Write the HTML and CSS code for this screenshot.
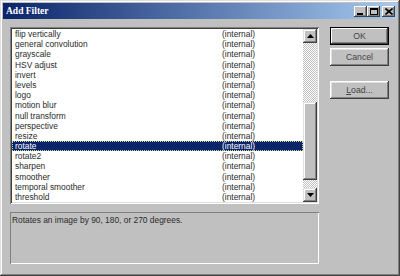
FILE: index.html
```html
<!DOCTYPE html>
<html lang="en">
<head>
    <meta charset="UTF-8">
    <title>Add Filter</title>
    <link rel="stylesheet" href="styles.css">
</head>
<body>
    <div class="window">
        <div class="titlebar">
            <span class="title">Add Filter</span>
            <div class="caption-buttons">
                <span class="cap-btn">
                    <svg width="7" height="7" viewBox="0 0 7 7"><rect x="0" y="5" width="6" height="2" fill="#000"/></svg>
                </span>
                <span class="cap-btn">
                    <svg width="8" height="7" viewBox="0 0 8 7"><rect x="0.5" y="0.5" width="7" height="6" fill="none" stroke="#000"/><rect x="0" y="0" width="8" height="2" fill="#000"/></svg>
                </span>
                <span class="cap-btn close">
                    <svg width="8" height="7" viewBox="0 0 8 7"><path d="M0.5 0.5 L7.5 6.5 M7.5 0.5 L0.5 6.5" stroke="#000" stroke-width="1.6"/></svg>
                </span>
            </div>
        </div>

        <div class="dialog">
            <div class="main">
                <div class="listbox">
                    <ul class="rows">
                        <li class="row"><span>flip vertically</span><span>(internal)</span></li>
                        <li class="row"><span>general convolution</span><span>(internal)</span></li>
                        <li class="row"><span>grayscale</span><span>(internal)</span></li>
                        <li class="row"><span>HSV adjust</span><span>(internal)</span></li>
                        <li class="row"><span>invert</span><span>(internal)</span></li>
                        <li class="row"><span>levels</span><span>(internal)</span></li>
                        <li class="row"><span>logo</span><span>(internal)</span></li>
                        <li class="row"><span>motion blur</span><span>(internal)</span></li>
                        <li class="row"><span>null transform</span><span>(internal)</span></li>
                        <li class="row"><span>perspective</span><span>(internal)</span></li>
                        <li class="row"><span>resize</span><span>(internal)</span></li>
                        <li class="row selected"><span>rotate</span><span>(internal)</span></li>
                        <li class="row"><span>rotate2</span><span>(internal)</span></li>
                        <li class="row"><span>sharpen</span><span>(internal)</span></li>
                        <li class="row"><span>smoother</span><span>(internal)</span></li>
                        <li class="row"><span>temporal smoother</span><span>(internal)</span></li>
                        <li class="row"><span>threshold</span><span>(internal)</span></li>
                    </ul>
                    <div class="scrollbar">
                        <span class="arrow">
                            <svg width="7" height="4" viewBox="0 0 7 4"><path d="M3.5 0 L7 4 L0 4 Z" fill="#000"/></svg>
                        </span>
                        <span class="track track-top"></span>
                        <span class="thumb"></span>
                        <span class="track track-bottom"></span>
                        <span class="arrow">
                            <svg width="7" height="4" viewBox="0 0 7 4"><path d="M0 0 L7 0 L3.5 4 Z" fill="#000"/></svg>
                        </span>
                    </div>
                </div>
                <div class="desc">Rotates an image by 90, 180, or 270 degrees.</div>
            </div>

            <div class="buttons">
                <button class="btn default">OK</button>
                <button class="btn">Cancel</button>
                <button class="btn load"><u>L</u>oad...</button>
            </div>
        </div>
    </div>
</body>
</html>
```

FILE: styles.css
```css
body {
    margin: 0;
    padding: 0;
    background-color: #c0c0c0;
    font-family: 'Liberation Sans', Arial, sans-serif;
    font-size: 8.4px;
    color: #2a2a2a;
}
.window {
    width: 400px;
    height: 276px;
    box-sizing: border-box;
    padding: 3px;
    background-color: #c0c0c0;
    box-shadow: inset -1px -1px #404040, inset 1px 1px #dfdfdf,
                inset -2px -2px #808080, inset 2px 2px #ffffff;
}
.titlebar {
    height: 16px;
    display: flex;
    align-items: center;
    justify-content: space-between;
    padding: 0 2px 0 2px;
    background: linear-gradient(to right, #0a246a, #a6caf0);
}
.title {
    font-family: 'Liberation Serif', 'Times New Roman', serif;
    font-weight: bold;
    font-size: 9.5px;
    color: #ffffff;
    padding-left: 1px;
}
.caption-buttons {
    display: flex;
    align-items: center;
}
.cap-btn {
    width: 13px;
    height: 11px;
    box-sizing: border-box;
    display: flex;
    align-items: center;
    justify-content: center;
    background-color: #c0c0c0;
    box-shadow: inset -1px -1px #404040, inset 1px 1px #ffffff,
                inset -2px -2px #808080;
}
.cap-btn.close {
    margin-left: 2px;
}
.dialog {
    display: flex;
    padding: 8px 0 0 7px;
}
.main {
    width: 309px;
    display: flex;
    flex-direction: column;
    gap: 8px;
}
.listbox {
    height: 177px;
    box-sizing: border-box;
    padding: 2px;
    display: flex;
    background-color: #ffffff;
    box-shadow: inset 1px 1px #808080, inset -1px -1px #ffffff,
                inset 2px 2px #404040, inset -2px -2px #dfdfdf;
}
.rows {
    list-style: none;
    margin: 0;
    padding: 0;
    flex: 1;
    overflow: hidden;
}
.row {
    display: grid;
    grid-template-columns: 207px 1fr;
    height: 10.2px;
    line-height: 10.2px;
    padding-left: 3px;
    white-space: nowrap;
}
.row.selected {
    background-color: #0a246a;
    color: #ffffff;
    outline: 1px dotted #d8d890;
    outline-offset: -1px;
}
.scrollbar {
    width: 14px;
    display: flex;
    flex-direction: column;
}
.arrow,
.thumb {
    background-color: #c0c0c0;
    box-shadow: inset -1px -1px #404040, inset 1px 1px #dfdfdf,
                inset -2px -2px #808080, inset 2px 2px #ffffff;
}
.arrow {
    height: 14px;
    display: flex;
    align-items: center;
    justify-content: center;
}
.track {
    background-color: #e8e8e8;
    background-image: repeating-conic-gradient(#ffffff 0 25%, #c0c0c0 0 50%);
    background-size: 2px 2px;
}
.track-top {
    height: 59px;
}
.thumb {
    height: 78px;
}
.track-bottom {
    flex: 1;
}
.desc {
    height: 52px;
    box-sizing: border-box;
    padding: 3px 2px;
    box-shadow: inset 1px 1px #808080, inset -1px -1px #ffffff;
}
.buttons {
    display: flex;
    flex-direction: column;
    gap: 3px;
    margin-left: 11px;
}
.btn {
    width: 59px;
    height: 18px;
    padding: 0;
    border: none;
    background-color: #c0c0c0;
    font-family: 'Liberation Sans', Arial, sans-serif;
    font-size: 8.7px;
    color: #444;
    box-shadow: inset -1px -1px #404040, inset 1px 1px #ffffff,
                inset -2px -2px #808080, inset 2px 2px #dfdfdf;
}
.btn.default {
    box-shadow: inset 0 0 0 1px #000000, inset -2px -2px #404040,
                inset 2px 2px #ffffff, inset -3px -3px #808080;
}
.btn.load {
    margin-top: 12px;
}
```
